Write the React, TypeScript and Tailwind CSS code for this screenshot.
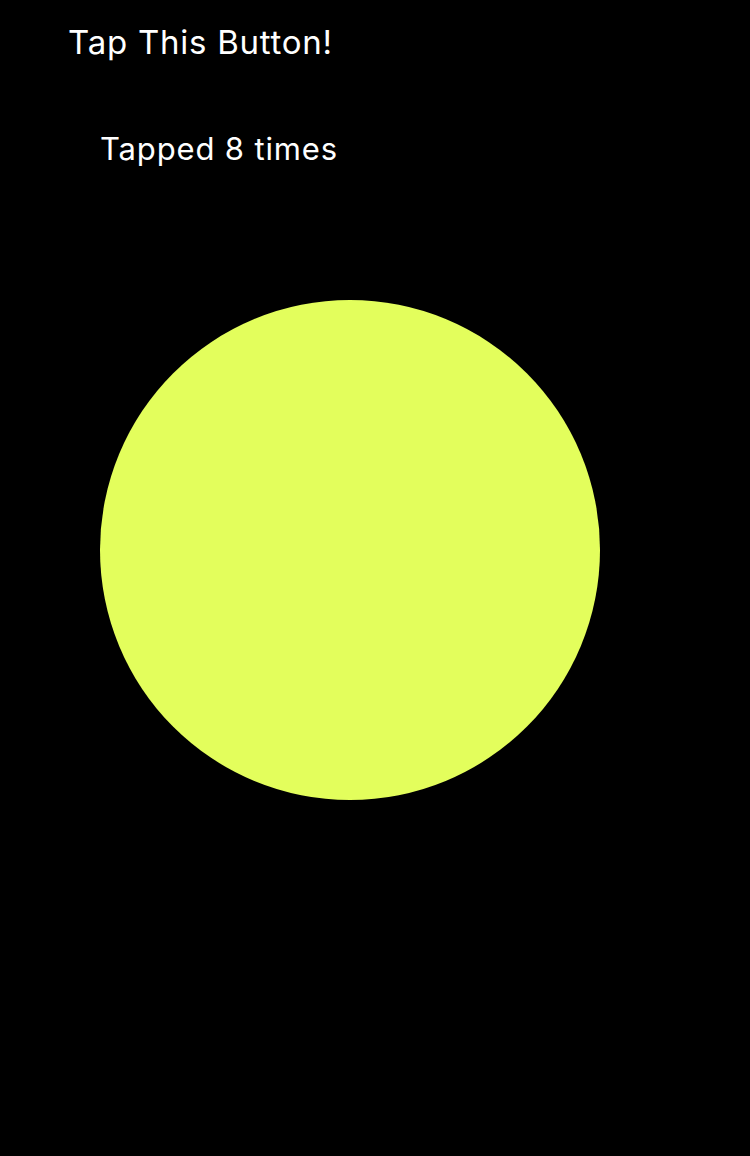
import { useState } from 'react';

export default function App() {
  const [count, setCount] = useState(8);

  return (
    <div className="min-h-[1156px] w-[750px] bg-black text-white" style={{ fontFamily: 'Inter, "Noto Sans", sans-serif' }}>
      <div className="flex flex-col pt-[22px]">
        <h1 className="pl-[68px] text-[33px] leading-[40px] font-normal tracking-[0.75px]">Tap This Button!</h1>
        <p className="pl-[100px] mt-[68px] text-[31px] leading-[38px] tracking-[0.85px]">Tapped {count} times</p>
        <button
          onClick={() => setCount(c => c + 1)}
          className="ml-[100px] mt-[132px] h-[500px] w-[500px] rounded-full bg-[#e3fe5c] cursor-pointer"
          aria-label="Tap"
        />
      </div>
    </div>
  );
}
